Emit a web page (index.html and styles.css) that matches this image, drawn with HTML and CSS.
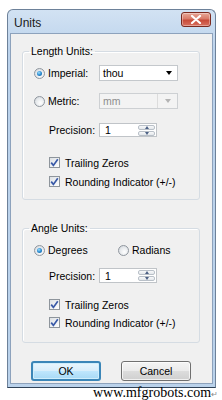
FILE: index.html
```html
<!DOCTYPE html>
<html>
<head>
<meta charset="utf-8">
<link rel="stylesheet" href="styles.css">
</head>
<body>
<div class="window">
  <div class="titlebar">
    <span class="title">Units</span>
    <div class="close">
      <svg width="12" height="9" viewBox="0 0 12 9"><path d="M2 1 L10 8 M10 1 L2 8" stroke="#fff" stroke-width="2.2" stroke-linecap="round"/></svg>
    </div>
  </div>
  <div class="client">
    <fieldset class="group g1">
      <legend>Length Units:</legend>
      <div class="row r1">
        <label class="opt"><span class="rb on"></span>Imperial:</label>
        <div class="combo"><span class="ctext">thou</span><span class="tri"></span></div>
      </div>
      <div class="row r2">
        <label class="opt"><span class="rb"></span>Metric:</label>
        <div class="combo disabled"><span class="ctext">mm</span><span class="abox"><span class="tri"></span></span></div>
      </div>
      <div class="row prec p1">
        <span class="plabel">Precision:</span>
        <div class="spin"><span class="sval">1</span><div class="sbtns"><span class="sb up"><i></i></span><span class="sb dn"><i></i></span></div></div>
      </div>
      <div class="check k1"><span class="cb"><svg width="9" height="9" viewBox="0 0 9 9"><path d="M1.2 4.6 L3.4 7.4 L7.8 1.2" fill="none" stroke="#3a5aa8" stroke-width="1.7"/></svg></span>Trailing Zeros</div>
      <div class="check k2"><span class="cb"><svg width="9" height="9" viewBox="0 0 9 9"><path d="M1.2 4.6 L3.4 7.4 L7.8 1.2" fill="none" stroke="#3a5aa8" stroke-width="1.7"/></svg></span>Rounding Indicator (+/-)</div>
    </fieldset>
    <fieldset class="group g2">
      <legend>Angle Units:</legend>
      <div class="row r3">
        <label class="opt wide"><span class="rb on"></span>Degrees</label>
        <label class="opt"><span class="rb"></span>Radians</label>
      </div>
      <div class="row prec p2">
        <span class="plabel">Precision:</span>
        <div class="spin"><span class="sval">1</span><div class="sbtns"><span class="sb up"><i></i></span><span class="sb dn"><i></i></span></div></div>
      </div>
      <div class="check k3"><span class="cb"><svg width="9" height="9" viewBox="0 0 9 9"><path d="M1.2 4.6 L3.4 7.4 L7.8 1.2" fill="none" stroke="#3a5aa8" stroke-width="1.7"/></svg></span>Trailing Zeros</div>
      <div class="check k4"><span class="cb"><svg width="9" height="9" viewBox="0 0 9 9"><path d="M1.2 4.6 L3.4 7.4 L7.8 1.2" fill="none" stroke="#3a5aa8" stroke-width="1.7"/></svg></span>Rounding Indicator (+/-)</div>
    </fieldset>
    <div class="buttons">
      <button class="btn ok">OK</button>
      <button class="btn">Cancel</button>
    </div>
  </div>
</div>
<div class="watermark">www.mfgrobots.com<span class="ret">↵</span></div>
</body>
</html>
```

FILE: styles.css
```css
html, body {
  margin: 0;
  padding: 0;
  background: #fff;
}
body {
  position: relative;
  width: 222px;
  height: 400px;
  overflow: hidden;
  font-family: "Liberation Sans", Arial, sans-serif;
  font-size: 10px;
  color: #000;
}
.window {
  margin: 9px 0 0 7px;
  width: 203px;
  border: 1px solid #6d8199;
  border-bottom-color: #2f4257;
  border-radius: 6px 6px 0 0;
  background: linear-gradient(#d2e2f3, #bcd3ec 40px, #bad2eb);
  padding: 0 2px 3px;
}
.titlebar {
  height: 23px;
  display: flex;
  align-items: center;
  justify-content: space-between;
  padding: 0 2px 0 4px;
}
.title {
  font-size: 12px;
  color: #1a1a1a;
  margin-top: 2px;
}
.close {
  width: 28px;
  height: 13px;
  margin-top: -4px;
  border: 1px solid #7a2a20;
  border-radius: 3px;
  background: linear-gradient(#e8a898, #d87a68 45%, #c84a38 55%, #d87060);
  display: flex;
  align-items: center;
  justify-content: center;
  box-shadow: inset 0 0 0 1px rgba(255,255,255,0.35);
}
.client {
  background: #f0f0f0;
  border: 1px solid #8da2bc;
  padding: 12px 0 2px 11px;
}
.group {
  margin: 0;
  width: 178px;
  box-sizing: border-box;
  border: 1px solid #d5dce3;
  border-radius: 3px;
  padding: 0 0 0 11px;
  min-width: 0;
  box-shadow: inset 1px 1px 0 #fff;
}
.g1 { padding-bottom: 11px; }
.g2 { margin-top: 23px; padding-bottom: 13px; }
legend {
  margin-left: -5px;
  padding: 0 2px;
  font-size: 10.5px;
  line-height: 10px;
  height: 10px;
}
.row {
  display: flex;
  align-items: center;
}
.r1 { margin-top: 9px; height: 16px; }
.r2 { margin-top: 12px; height: 16px; }
.p1 { margin-top: 14px; height: 14px; }
.r3 { margin-top: 10px; height: 14px; }
.p2 { margin-top: 11px; height: 15px; }
.opt {
  display: flex;
  align-items: center;
  width: 65px;
  font-size: 10.5px;
}
.opt.wide { width: 84px; }
.rb {
  width: 11px;
  height: 11px;
  box-sizing: border-box;
  border-radius: 50%;
  border: 1px solid #8f969e;
  background: radial-gradient(circle at 60% 65%, #ffffff 0, #e6e9ec 55%, #c9cfd5 100%);
  margin-right: 3px;
  position: relative;
  flex: none;
}
.rb.on::after {
  content: "";
  position: absolute;
  left: 2px;
  top: 2px;
  width: 5px;
  height: 5px;
  border-radius: 50%;
  background: radial-gradient(circle at 40% 35%, #9fe0ff 0, #2a8bd0 50%, #135a9a 100%);
}
.combo {
  width: 79px;
  height: 16px;
  box-sizing: border-box;
  border: 1px solid #c4c8cc;
  background: #fff;
  display: flex;
  align-items: center;
  justify-content: space-between;
  padding-left: 3px;
  font-size: 10.5px;
}
.tri {
  width: 0;
  height: 0;
  border-left: 3.5px solid transparent;
  border-right: 3.5px solid transparent;
  border-top: 4px solid #000;
  margin-right: 5px;
}
.combo.disabled {
  height: 16px;
  background: #f3f3f3;
  border-color: #cdd0d3;
  color: #8d8d8d;
  padding-right: 0;
}
.abox {
  width: 19px;
  height: 100%;
  border-left: 1px solid #dcdcdc;
  display: flex;
  align-items: center;
  justify-content: center;
}
.abox .tri {
  border-top-color: #b4b4b4;
  margin-right: 0;
}
.plabel {
  margin-left: 15px;
  width: 50px;
  font-size: 10.5px;
}
.spin {
  width: 58px;
  height: 100%;
  box-sizing: border-box;
  border: 1px solid #c0c4c8;
  background: #fff;
  display: flex;
  align-items: stretch;
  justify-content: space-between;
  font-size: 10.5px;
}
.sval {
  padding-left: 5px;
  display: flex;
  align-items: center;
}
.sbtns {
  width: 17px;
  display: flex;
  flex-direction: column;
  padding: 1px;
  gap: 1px;
}
.sb {
  flex: 1;
  border: 1px solid #b9c0c8;
  border-radius: 2px;
  background: linear-gradient(#f8f9fa, #e3e7eb);
  display: flex;
  align-items: center;
  justify-content: center;
}
.sb i {
  width: 0;
  height: 0;
  border-left: 2.5px solid transparent;
  border-right: 2.5px solid transparent;
}
.up i { border-bottom: 3px solid #4d6185; }
.dn i { border-top: 3px solid #4d6185; }
.check {
  display: flex;
  align-items: center;
  height: 13px;
  padding-left: 15px;
  font-size: 10.5px;
}
.k1 { margin-top: 19px; }
.k2 { margin-top: 6px; }
.k3 { margin-top: 15px; }
.k4 { margin-top: 5px; }
.cb {
  width: 11px;
  height: 11px;
  box-sizing: border-box;
  border: 1px solid #8e959c;
  background: linear-gradient(135deg, #dde1e5, #ffffff);
  display: flex;
  align-items: center;
  justify-content: center;
  margin-right: 5px;
  flex: none;
}
.buttons {
  display: flex;
  gap: 20px;
  margin-top: 18px;
  padding-left: 9px;
}
.btn {
  width: 70px;
  height: 20px;
  box-sizing: border-box;
  border: 1px solid #707070;
  border-radius: 3px;
  background: linear-gradient(#f4f4f4, #ebebeb 48%, #dcdcdc 52%, #cfcfcf);
  font-family: "Liberation Sans", Arial, sans-serif;
  font-size: 10.5px;
  color: #000;
  padding: 0;
  box-shadow: inset 0 0 0 1px rgba(255,255,255,0.7);
}
.btn.ok {
  border: 2px solid #3b86b8;
  background: linear-gradient(#e9f6fd, #d8eefb 48%, #bee6fd 52%, #a7d9f5);
  box-shadow: inset 0 0 0 1px #cfeefc;
}
.watermark {
  position: absolute;
  left: 93px;
  top: 386px;
  font-family: "Liberation Serif", "Times New Roman", serif;
  font-size: 14px;
  line-height: 14px;
  color: #000;
}
.ret {
  font-size: 8px;
  color: #888;
}
```
